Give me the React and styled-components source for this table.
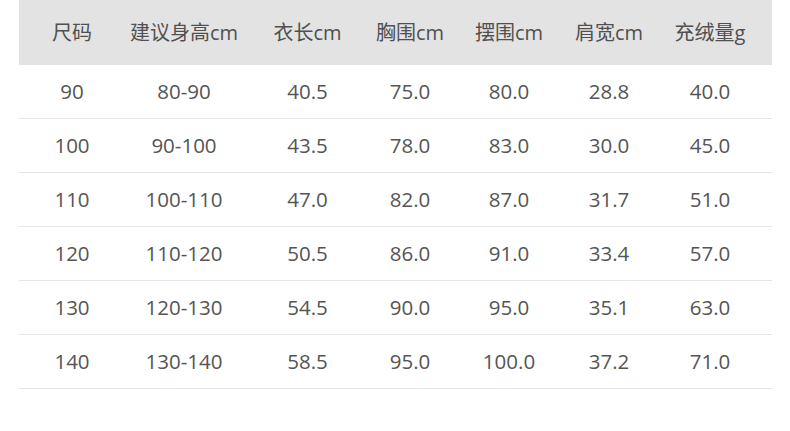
import React from "react";
import styled, { createGlobalStyle } from "styled-components";

const Global = createGlobalStyle`
  html, body { margin: 0; padding: 0; background: #fff; }
  body { font-family: "Open Sans", "Noto Sans CJK SC", sans-serif; }
`;

const COLS = "106px 118px 129px 76px 122px 78px 124px";

const Page = styled.div`
  width: 790px;
  height: 431px;
  padding-left: 19px;
  box-sizing: border-box;
`;

const Table = styled.div`
  width: 753px;
  display: flex;
  flex-direction: column;
`;

const HeaderRow = styled.div`
  display: grid;
  grid-template-columns: ${COLS};
  height: 65px;
  background: #e3e3e3;
  align-items: center;
`;

const Row = styled.div`
  display: grid;
  grid-template-columns: ${COLS};
  height: 53px;
  border-bottom: 1px solid #e6e6e6;
  align-items: center;
`;

const Cell = styled.div`
  text-align: center;
  font-size: ${(p) => (p.$head ? "20px" : "20.5px")};
  color: ${(p) => (p.$head ? "#505050" : "#555555")};
  white-space: nowrap;
  line-height: 1;
`;

const headers = ["尺码", "建议身高cm", "衣长cm", "胸围cm", "摆围cm", "肩宽cm", "充绒量g"];
const rows = [
  ["90", "80-90", "40.5", "75.0", "80.0", "28.8", "40.0"],
  ["100", "90-100", "43.5", "78.0", "83.0", "30.0", "45.0"],
  ["110", "100-110", "47.0", "82.0", "87.0", "31.7", "51.0"],
  ["120", "110-120", "50.5", "86.0", "91.0", "33.4", "57.0"],
  ["130", "120-130", "54.5", "90.0", "95.0", "35.1", "63.0"],
  ["140", "130-140", "58.5", "95.0", "100.0", "37.2", "71.0"],
];

export default function App() {
  return (
    <>
      <Global />
      <Page>
        <Table>
          <HeaderRow>
            {headers.map((h) => (
              <Cell $head key={h}>{h}</Cell>
            ))}
          </HeaderRow>
          {rows.map((r) => (
            <Row key={r[0]}>
              {r.map((c, i) => (
                <Cell key={i}>{c}</Cell>
              ))}
            </Row>
          ))}
        </Table>
      </Page>
    </>
  );
}
